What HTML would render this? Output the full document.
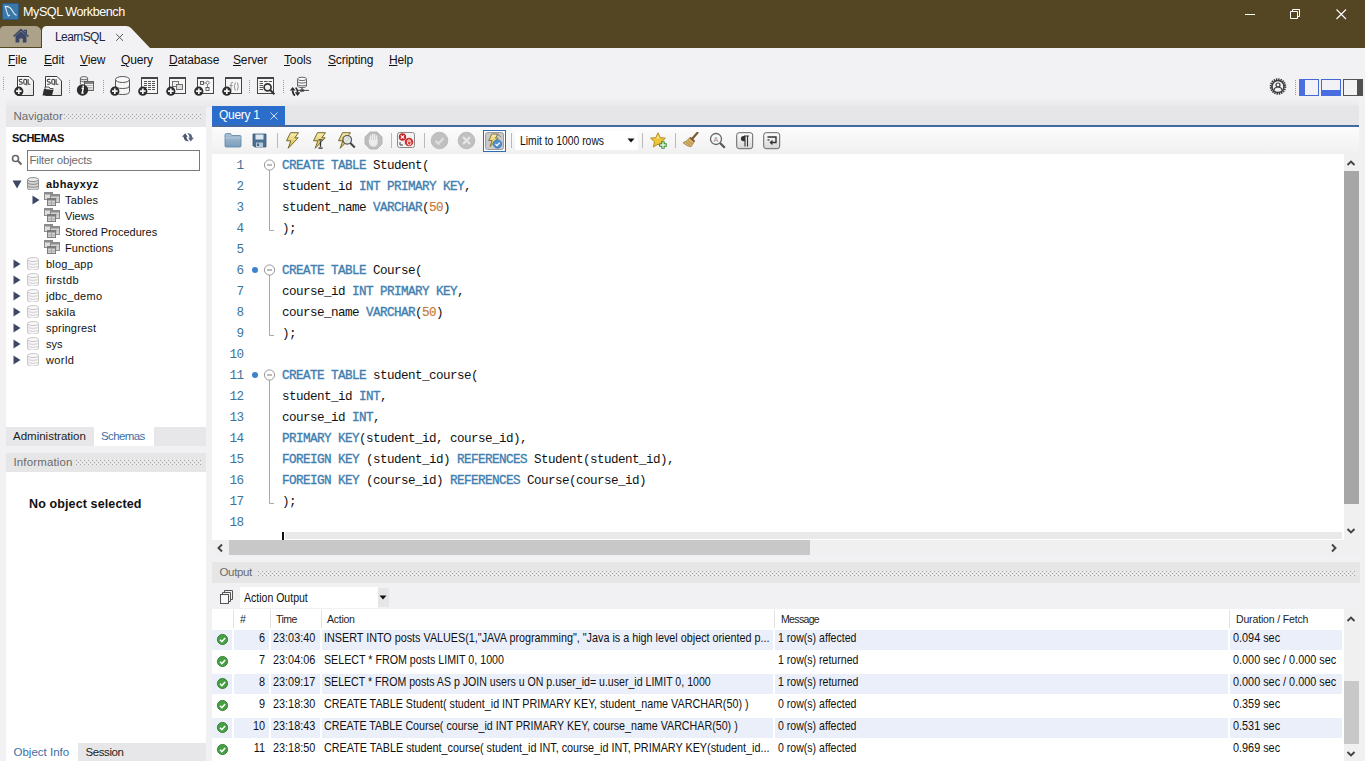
<!DOCTYPE html>
<html><head><meta charset="utf-8">
<style>
*{box-sizing:border-box;margin:0;padding:0}
html,body{width:1365px;height:761px;overflow:hidden;background:#f1f1f4;font-family:"Liberation Sans",sans-serif;}
.abs{position:absolute}
#titlebar{position:absolute;left:0;top:0;width:1365px;height:48px;background:#544623}
#title{position:absolute;left:23px;top:5px;color:#fff;font-size:12.6px;letter-spacing:-0.45px;white-space:nowrap}
#menubar{position:absolute;left:0;top:48px;width:1365px;height:24px;background:#f2f2f5}
.mi{position:absolute;top:53px;font-size:12px;letter-spacing:-0.15px;color:#111;white-space:nowrap}
.mi u{text-decoration:underline;text-underline-offset:1px}
#toolbar{position:absolute;left:0;top:72px;width:1365px;height:28px;background:#f2f2f5}
.t{position:absolute;white-space:nowrap}
.nav{font-size:11px;color:#111}
.code{font-family:"Liberation Mono",monospace;font-size:12.6px;letter-spacing:-0.56px;color:#111;white-space:pre;position:absolute;left:282px}
.kw{color:#3f80b0;-webkit-text-stroke:0.350px #3f80b0}
.num{color:#c67c38;-webkit-text-stroke:0.200px #c67c38}
.ln{position:absolute;font-family:"Liberation Mono",monospace;font-size:12.6px;letter-spacing:-0.56px;color:#3b7499;text-align:right;width:30px;left:213.500px}
.dots{position:absolute;height:7px;background:repeating-conic-gradient(#cbcbcf 0% 25%,transparent 0% 50%) 0 0/2px 2px}
.row{position:absolute;left:212px;width:1129px;height:22px}
.row.alt{background:#ebeffa}
.cell{position:absolute;font-size:13px;color:#111;white-space:nowrap;transform-origin:0 50%;transform:scaleX(0.835)}
</style></head><body>
<svg width="0" height="0" style="position:absolute"><defs><pattern id="dp" width="4" height="4" patternUnits="userSpaceOnUse"><rect x="0" y="0" width="1" height="1" fill="#a4a4a4"/><rect x="2" y="2" width="1" height="1" fill="#a4a4a4"/><rect x="2" y="0" width="1" height="1" fill="#f4f4f4"/><rect x="0" y="2" width="1" height="1" fill="#f4f4f4"/></pattern></defs></svg><div id="titlebar"></div>
<div id="title">MySQL Workbench</div>
<div id="menubar"></div>
<div id="toolbar"></div>

<div class="abs" style="left:6px;top:97px;width:1353px;height:10px;background:linear-gradient(#f2f2f5,#e9e9eb)"></div>
<!-- app icon -->
<svg class="abs" style="left:2px;top:3px" width="17" height="17" viewBox="0 0 17 17"><rect x="0.5" y="0.5" width="16" height="16" rx="1" fill="#3a78aa" stroke="#2a5a85"/><path d="M2.5 3.5 C6 3 9 5 10.5 8 C11.5 10 12.5 11.5 14.5 12.5 M3.5 4 C4 7 5 10 6.5 13.5 M6 13 L8 12" stroke="#dfe9f3" stroke-width="1.1" fill="none"/></svg>
<!-- home tab -->
<svg class="abs" style="left:0;top:26px" width="160" height="22" viewBox="0 0 160 22">
<path d="M0 21 L0 4 Q0 0 5 0 L35 0 Q39 0 41 4 L41 21 Z" fill="#aba289"/>
<path d="M42 22 L42 5 Q42 0 47 0 L126 0 Q129 0 131 2 L150 22 Z" fill="#f2f2f5"/>
<path d="M13.5 10.5 L21 3.6 L28.5 10.5 M23.8 4.5 L26.2 4.5 L26.2 7.5" stroke="#3b4668" stroke-width="1.6" fill="none"/>
<path d="M15.5 10 L21 5.2 L26.5 10 L26.5 16.5 L22.8 16.5 L22.8 12.5 L19.4 12.5 L19.4 16.5 L15.5 16.5 Z" fill="#3b4668"/>
<path d="M116.2 8 L123 14.800 M123 8 L116.2 14.800" stroke="#555" stroke-width="1" fill="none"/>
</svg>
<div class="t" style="left:55px;top:30px;font-size:12px;color:#1d2440;letter-spacing:-0.600px">LearnSQL</div>
<!-- window controls -->
<svg class="abs" style="left:1235px;top:0" width="130" height="28" viewBox="0 0 130 28">
<path d="M10 14.5 L20 14.5" stroke="#fff" stroke-width="1"/>
<path d="M55.5 11.5 h7 v7 h-7 z M57.5 11.5 v-2 h7 v7 h-2" stroke="#fff" stroke-width="1" fill="none"/>
<path d="M101.5 9.5 L111 19 M111 9.5 L101.5 19" stroke="#fff" stroke-width="1.1"/>
</svg>
<div class="mi" style="left:8px"><u>F</u>ile</div>
<div class="mi" style="left:44px"><u>E</u>dit</div>
<div class="mi" style="left:80px"><u>V</u>iew</div>
<div class="mi" style="left:121px"><u>Q</u>uery</div>
<div class="mi" style="left:169px"><u>D</u>atabase</div>
<div class="mi" style="left:233px"><u>S</u>erver</div>
<div class="mi" style="left:284px"><u>T</u>ools</div>
<div class="mi" style="left:328px"><u>S</u>cripting</div>
<div class="mi" style="left:389px"><u>H</u>elp</div>

<svg width="0" height="0" style="position:absolute"><defs>
<linearGradient id="pg" x1="0" y1="0" x2="1" y2="1"><stop offset="0.300" stop-color="#fff"/><stop offset="1" stop-color="#e2e2e2"/></linearGradient>
<g id="plus"><circle cx="4.8" cy="15.2" r="4.6" fill="#2d2d2d"/><path d="M4.8 12.4 v5.6 M2 15.2 h5.6" stroke="#f4f4f4" stroke-width="1.7"/></g>
<g id="sqlpage"><path d="M3.5 0.5 h11.5 l4.5 4.5 v14.5 h-16 z" fill="url(#pg)" stroke="#3a3a3a" stroke-width="1"/><path d="M8.300 3.400 h-2 q-1.100 0 -1.100 1.200 q0 1.200 1.100 1.200 h0.900 q1.100 0 1.100 1.200 q0 1.200 -1.100 1.200 h-2.200 M9.800 4.600 q0 -1.200 1.100 -1.200 h0.600 q1.100 0 1.100 1.200 v2.400 q0 1.200 -1.100 1.200 h-0.600 q-1.100 0 -1.100 -1.200 z M11.600 7.800 l1.200 1.400 M14.100 3 v5.200 h2.300" stroke="#4a4a4a" stroke-width="1.150" fill="none"/></g>
<g id="win"><rect x="3.5" y="1.5" width="16" height="16" fill="#f6f6f6" stroke="#444" stroke-width="1"/><rect x="3" y="1" width="17" height="2" fill="#444"/></g>
</defs></svg>
<div class="abs" style="left:3px;top:77px;width:1px;height:13px;background-image:linear-gradient(#9a9aa0 50%,transparent 50%);background-size:1px 2px"></div><div class="abs" style="left:69px;top:80px;width:1px;height:13px;background-image:linear-gradient(#9a9aa0 50%,transparent 50%);background-size:1px 2px"></div><div class="abs" style="left:103px;top:80px;width:1px;height:13px;background-image:linear-gradient(#9a9aa0 50%,transparent 50%);background-size:1px 2px"></div><div class="abs" style="left:249px;top:80px;width:1px;height:13px;background-image:linear-gradient(#9a9aa0 50%,transparent 50%);background-size:1px 2px"></div><div class="abs" style="left:283px;top:80px;width:1px;height:13px;background-image:linear-gradient(#9a9aa0 50%,transparent 50%);background-size:1px 2px"></div><svg class="abs" style="left:14px;top:76px" width="21" height="21" viewBox="0 0 21 21"><use href="#sqlpage"/><use href="#plus"/></svg><svg class="abs" style="left:42px;top:76px" width="21" height="21" viewBox="0 0 21 21"><use href="#sqlpage"/><path d="M0.5 19.5 L2 13 L3 13 L3 11 L7 11 L8 12.5 L11 12.5 L11 14 L11.5 14 L10 19.5 Z" fill="#2d2d2d"/><path d="M3 13 L3 11 L7 11 L8 12.5 L11 12.5 L11 14" fill="#eee" stroke="#2d2d2d" stroke-width="0.8"/></svg><svg class="abs" style="left:76px;top:76px" width="21" height="21" viewBox="0 0 21 21"><ellipse cx="8" cy="2.2" rx="3.6" ry="1.6" fill="#f4f4f4" stroke="#555" stroke-width="0.9"/><path d="M4.4 2.2 v6 M11.6 2.2 v3" stroke="#555" stroke-width="0.9" fill="none"/><path d="M4.4 5 q3.6 2 7.2 0" stroke="#555" stroke-width="0.8" fill="none"/><rect x="8.5" y="5.5" width="9" height="9" fill="#f2f2f2" stroke="#555" stroke-width="0.9"/><path d="M8.5 7 h9" stroke="#555" stroke-width="1.4"/><path d="M10 9.5 h6.5 M10 11.5 h6.5 M10 13 h6.5" stroke="#999" stroke-width="0.7"/><circle cx="6.5" cy="14" r="5.7" fill="#2d2d2d"/><path d="M7.3 9.6 l-0.3 1.6 M5.6 12.3 h1.6 l-1 4.6 h1.4" stroke="#fff" stroke-width="1.5" fill="none"/></svg><svg class="abs" style="left:110px;top:76px" width="21" height="21" viewBox="0 0 21 21"><path d="M5.5 3.5 v12 q0 3 7 3 q7 0 7-3 v-12" fill="#f5f5f5" stroke="#555" stroke-width="1"/><ellipse cx="12.5" cy="3.5" rx="7" ry="3" fill="#f8f8f8" stroke="#555" stroke-width="1"/><path d="M5.5 9.5 q0 3 7 3 q7 0 7-3" fill="none" stroke="#555" stroke-width="1"/><use href="#plus"/></svg><svg class="abs" style="left:138px;top:76px" width="21" height="21" viewBox="0 0 21 21"><use href="#win"/><path d="M6 5.5 h12 M6 7.5 h12 M6 9.5 h12 M6 11.5 h12 M6 13.5 h12" stroke="#555" stroke-width="1" stroke-dasharray="3 1"/><use href="#plus"/></svg><svg class="abs" style="left:166px;top:76px" width="21" height="21" viewBox="0 0 21 21"><use href="#win"/><rect x="6.5" y="5.500" width="6" height="5" fill="#eee" stroke="#666" stroke-width="0.9"/><rect x="10.500" y="8.500" width="6" height="5" fill="#ddd" stroke="#666" stroke-width="0.9"/><use href="#plus"/></svg><svg class="abs" style="left:194px;top:76px" width="21" height="21" viewBox="0 0 21 21"><use href="#win"/><rect x="6.500" y="5.500" width="3" height="3" fill="#eee" stroke="#555" stroke-width="0.9"/><path d="M13.500 4.800 l2 2 l-2 2 l-2 -2 z" fill="#eee" stroke="#555" stroke-width="0.8"/><rect x="12" y="11.500" width="3" height="3" fill="#eee" stroke="#555" stroke-width="0.9"/><path d="M9.500 7 h2 M13.500 9 v2.500" stroke="#555" stroke-width="0.7"/><use href="#plus"/></svg><svg class="abs" style="left:222px;top:76px" width="21" height="21" viewBox="0 0 21 21"><use href="#win"/><path d="M9 14.500 V8 q0 -2 2 -1.600 M7.600 9.500 h3 M13.300 6.500 q-2 4 0 8 M15.300 6.500 q2 4 0 8" stroke="#8a8a8a" stroke-width="0.900" fill="none"/><use href="#plus"/></svg><svg class="abs" style="left:254px;top:76px" width="21" height="21" viewBox="0 0 21 21"><use href="#win"/><path d="M5.500 5.500 h13 M5.500 7.500 h4 M5.500 9.500 h4 M5.500 11.500 h4 M5.500 13.500 h4" stroke="#555" stroke-width="1" stroke-dasharray="3.500 1"/><circle cx="13.600" cy="11.300" r="3.500" fill="#f2f2f2" stroke="#333" stroke-width="1.700"/><path d="M16.200 14 L20.300 18.300" stroke="#333" stroke-width="2"/></svg><svg class="abs" style="left:289px;top:76px" width="21" height="21" viewBox="0 0 21 21"><path d="M8.500 3 v7 q0 1.600 4.500 1.600 q4.500 0 4.500 -1.600 v-7" fill="#f7f7f7" stroke="#5a5a5a" stroke-width="0.900"/><ellipse cx="13" cy="2.900" rx="4.500" ry="1.700" fill="#f9f9f9" stroke="#5a5a5a" stroke-width="0.900"/><path d="M8.500 5.400 q0 1.700 4.500 1.700 q4.500 0 4.500 -1.700 M8.500 8.200 q0 1.700 4.500 1.700 q4.500 0 4.500 -1.700" fill="none" stroke="#5a5a5a" stroke-width="0.900"/><path d="M13 11.600 v2" stroke="#444" stroke-width="1.200"/><path d="M9 14.400 h11" stroke="#444" stroke-width="1"/><rect x="11" y="13.200" width="4.200" height="2.500" rx="1" fill="#444"/><path d="M0.800 14.600 L3.700 11 L6.600 14.600 Z M5.800 16.200 L11.400 16.200 L8.600 19.900 Z" fill="#2d2d2d"/><path d="M3.700 14.400 Q3.700 18 6 19.600 M8.600 16.400 Q8.600 13 6.600 11.600" stroke="#2d2d2d" stroke-width="1.700" fill="none"/></svg><svg class="abs" style="left:1268px;top:76px" width="20" height="21" viewBox="0 0 20 21"><circle cx="10" cy="10.500" r="7.200" fill="none" stroke="#3b3b3b" stroke-width="2.200" stroke-dasharray="1.400 0.860"/><circle cx="10" cy="10.500" r="6" fill="#f2f2f5" stroke="#3b3b3b" stroke-width="1.500"/><circle cx="10" cy="9" r="2" fill="none" stroke="#3b3b3b" stroke-width="1.200"/><path d="M6 14 q0.500 -3 4 -3 q3.500 0 4 3" fill="none" stroke="#3b3b3b" stroke-width="1.200"/></svg><div class="abs" style="left:1295px;top:80px;width:1px;height:15px;background-image:linear-gradient(#9a9aa0 50%,transparent 50%);background-size:1px 2px"></div><svg class="abs" style="left:1299px;top:79px" width="20" height="17" viewBox="0 0 20 17"><rect x="0.5" y="0.5" width="19" height="16" fill="#f1f1f6" stroke="#4467d4" stroke-width="1"/><rect x="0" y="0" width="6" height="17" fill="#4a6ee0"/></svg><svg class="abs" style="left:1321px;top:79px" width="20" height="17" viewBox="0 0 20 17"><rect x="0.5" y="0.5" width="19" height="16" fill="#f1f1f6" stroke="#4467d4" stroke-width="1"/><rect x="0" y="11" width="20" height="6" fill="#4a6ee0"/></svg><svg class="abs" style="left:1343px;top:79px" width="20" height="17" viewBox="0 0 20 17"><rect x="0.5" y="0.5" width="19" height="16" fill="#f3f3f3" stroke="#555" stroke-width="1"/><rect x="14" y="0" width="6" height="17" fill="#505050"/></svg>

<div class="abs" style="left:6px;top:106px;width:200px;height:21px;background:#e7e7e9"></div>
<div class="t lbl" style="left:13.500px;top:110px;font-size:11.500px;color:#6b6b6b;letter-spacing:0px">Navigator</div>
<svg class="abs" style="left:64px;top:114px" width="138" height="5"><rect width="138" height="5" fill="url(#dp)"/></svg>
<div class="abs" style="left:6px;top:127px;width:200px;height:300px;background:#fff"></div>
<div class="t tb" style="left:12px;top:132px;font-size:11px;font-weight:bold;color:#111;letter-spacing:-0.450px">SCHEMAS</div>
<svg class="abs" style="left:182px;top:132.500px" width="12" height="9" viewBox="0 0 12 9"><path d="M0 3.800 L3.200 0.200 L5.700 3.800 L4.500 3.800 Q4.300 6.500 6.900 8.300 Q2.200 8.700 1.500 3.800 Z" fill="#4b566f"/><path d="M11.900 4.700 L8.700 8.400 L6.200 4.700 L7.400 4.700 Q7.700 2 5.100 0.300 Q9.800 -0.100 10.400 4.700 Z" fill="#5a6782"/></svg>
<svg class="abs" style="left:11px;top:154px" width="12" height="12" viewBox="0 0 12 12"><circle cx="4.500" cy="4.500" r="3" fill="none" stroke="#666" stroke-width="1.600"/><path d="M6.800 6.800 L10.500 10.500" stroke="#666" stroke-width="2"/></svg>
<div class="abs" style="left:27px;top:150px;width:173px;height:21px;background:#fff;border:1px solid #7a7a7a"></div>
<div class="t tb" style="left:29.500px;top:154px;font-size:11.500px;color:#6d6d6d;letter-spacing:-0.200px">Filter objects</div>
<svg class="abs" style="left:12px;top:180px" width="10" height="9" viewBox="0 0 10 9"><path d="M0.500 0.500 h9 l-4.500 8 z" fill="#3d4766"/></svg><svg class="abs" style="left:27px;top:176.5px" width="12.200" height="13.600" viewBox="0 0 13 15" preserveAspectRatio="none"><path d="M0.600 2.800 v9.400 q0 2.300 5.900 2.300 q5.900 0 5.900 -2.300 v-9.400" fill="#d4d4d4" stroke="#858585" stroke-width="1"/><ellipse cx="6.500" cy="2.800" rx="5.900" ry="2.200" fill="#ececec" stroke="#858585" stroke-width="1"/><path d="M0.600 6 q0 2.200 5.900 2.200 q5.900 0 5.900 -2.200 M0.600 9.200 q0 2.200 5.900 2.200 q5.900 0 5.900 -2.200" fill="none" stroke="#858585" stroke-width="1"/></svg><div class="t nav" style="left:46px;top:178px;font-weight:bold;letter-spacing:0.4px;">abhayxyz</div><svg class="abs" style="left:32px;top:195px" width="8" height="10" viewBox="0 0 8 10"><path d="M0.500 0.500 v9 l7 -4.500 z" fill="#3d4766"/></svg><svg class="abs" style="left:44px;top:192px" width="17" height="15" viewBox="0 0 17 15"><rect x="0.500" y="0.500" width="8" height="7" fill="#dedede" stroke="#8c8c8c"/><rect x="0.500" y="0.500" width="8" height="2" fill="#8c8c8c"/><rect x="6.500" y="2.500" width="9" height="8" fill="#d6d6d6" stroke="#8c8c8c"/><rect x="6.500" y="2.500" width="9" height="2" fill="#8c8c8c"/><path d="M12 5 v5 M7 7 h8" stroke="#b5b5b5" stroke-width="0.800"/><rect x="3.500" y="6.500" width="8" height="7" fill="#d2d2d2" stroke="#7c7c7c"/><rect x="3.500" y="6.500" width="8" height="2" fill="#7c7c7c"/><path d="M4 11 h7 M7.500 9 v4" stroke="#9f9f9f" stroke-width="0.800"/></svg><div class="t nav" style="left:65px;top:194px;letter-spacing:0.25px;">Tables</div><svg class="abs" style="left:44px;top:208px" width="17" height="15" viewBox="0 0 17 15"><rect x="0.500" y="0.500" width="8" height="7" fill="#dedede" stroke="#8c8c8c"/><rect x="0.500" y="0.500" width="8" height="2" fill="#8c8c8c"/><rect x="6.500" y="2.500" width="9" height="8" fill="#d6d6d6" stroke="#8c8c8c"/><rect x="6.500" y="2.500" width="9" height="2" fill="#8c8c8c"/><path d="M12 5 v5 M7 7 h8" stroke="#b5b5b5" stroke-width="0.800"/><rect x="3.500" y="6.500" width="8" height="7" fill="#d2d2d2" stroke="#7c7c7c"/><rect x="3.500" y="6.500" width="8" height="2" fill="#7c7c7c"/><path d="M4 11 h7 M7.500 9 v4" stroke="#9f9f9f" stroke-width="0.800"/></svg><div class="t nav" style="left:65px;top:210px;">Views</div><svg class="abs" style="left:44px;top:224px" width="17" height="15" viewBox="0 0 17 15"><rect x="0.500" y="0.500" width="8" height="7" fill="#dedede" stroke="#8c8c8c"/><rect x="0.500" y="0.500" width="8" height="2" fill="#8c8c8c"/><rect x="6.500" y="2.500" width="9" height="8" fill="#d6d6d6" stroke="#8c8c8c"/><rect x="6.500" y="2.500" width="9" height="2" fill="#8c8c8c"/><path d="M12 5 v5 M7 7 h8" stroke="#b5b5b5" stroke-width="0.800"/><rect x="3.500" y="6.500" width="8" height="7" fill="#d2d2d2" stroke="#7c7c7c"/><rect x="3.500" y="6.500" width="8" height="2" fill="#7c7c7c"/><path d="M4 11 h7 M7.500 9 v4" stroke="#9f9f9f" stroke-width="0.800"/></svg><div class="t nav" style="left:65px;top:226px;letter-spacing:0.03px;">Stored Procedures</div><svg class="abs" style="left:44px;top:240px" width="17" height="15" viewBox="0 0 17 15"><rect x="0.500" y="0.500" width="8" height="7" fill="#dedede" stroke="#8c8c8c"/><rect x="0.500" y="0.500" width="8" height="2" fill="#8c8c8c"/><rect x="6.500" y="2.500" width="9" height="8" fill="#d6d6d6" stroke="#8c8c8c"/><rect x="6.500" y="2.500" width="9" height="2" fill="#8c8c8c"/><path d="M12 5 v5 M7 7 h8" stroke="#b5b5b5" stroke-width="0.800"/><rect x="3.500" y="6.500" width="8" height="7" fill="#d2d2d2" stroke="#7c7c7c"/><rect x="3.500" y="6.500" width="8" height="2" fill="#7c7c7c"/><path d="M4 11 h7 M7.500 9 v4" stroke="#9f9f9f" stroke-width="0.800"/></svg><div class="t nav" style="left:65px;top:242px;letter-spacing:0.08px;">Functions</div><svg class="abs" style="left:13px;top:259px" width="8" height="10" viewBox="0 0 8 10"><path d="M0.500 0.500 v9 l7 -4.500 z" fill="#3d4766"/></svg><svg class="abs" style="left:27px;top:256.5px" width="12.200" height="13.600" viewBox="0 0 13 15" preserveAspectRatio="none"><path d="M0.600 2.800 v9.400 q0 2.300 5.900 2.300 q5.900 0 5.900 -2.300 v-9.400" fill="#f6f6f6" stroke="#c2c2c2" stroke-width="1"/><ellipse cx="6.500" cy="2.800" rx="5.900" ry="2.200" fill="#f8f8f8" stroke="#c2c2c2" stroke-width="1"/><path d="M0.600 6 q0 2.200 5.900 2.200 q5.900 0 5.900 -2.200 M0.600 9.200 q0 2.200 5.900 2.200 q5.900 0 5.900 -2.200" fill="none" stroke="#cdcdcd" stroke-width="1"/></svg><div class="t nav" style="left:46px;top:258px;letter-spacing:0.22px;">blog_app</div><svg class="abs" style="left:13px;top:275px" width="8" height="10" viewBox="0 0 8 10"><path d="M0.500 0.500 v9 l7 -4.500 z" fill="#3d4766"/></svg><svg class="abs" style="left:27px;top:272.5px" width="12.200" height="13.600" viewBox="0 0 13 15" preserveAspectRatio="none"><path d="M0.600 2.800 v9.400 q0 2.300 5.900 2.300 q5.900 0 5.900 -2.300 v-9.400" fill="#f6f6f6" stroke="#c2c2c2" stroke-width="1"/><ellipse cx="6.500" cy="2.800" rx="5.900" ry="2.200" fill="#f8f8f8" stroke="#c2c2c2" stroke-width="1"/><path d="M0.600 6 q0 2.200 5.900 2.200 q5.900 0 5.900 -2.200 M0.600 9.200 q0 2.200 5.900 2.200 q5.900 0 5.900 -2.200" fill="none" stroke="#cdcdcd" stroke-width="1"/></svg><div class="t nav" style="left:46px;top:274px;letter-spacing:0.45px;">firstdb</div><svg class="abs" style="left:13px;top:291px" width="8" height="10" viewBox="0 0 8 10"><path d="M0.500 0.500 v9 l7 -4.500 z" fill="#3d4766"/></svg><svg class="abs" style="left:27px;top:288.5px" width="12.200" height="13.600" viewBox="0 0 13 15" preserveAspectRatio="none"><path d="M0.600 2.800 v9.400 q0 2.300 5.900 2.300 q5.900 0 5.900 -2.300 v-9.400" fill="#f6f6f6" stroke="#c2c2c2" stroke-width="1"/><ellipse cx="6.500" cy="2.800" rx="5.900" ry="2.200" fill="#f8f8f8" stroke="#c2c2c2" stroke-width="1"/><path d="M0.600 6 q0 2.200 5.900 2.200 q5.900 0 5.900 -2.200 M0.600 9.200 q0 2.200 5.900 2.200 q5.900 0 5.900 -2.200" fill="none" stroke="#cdcdcd" stroke-width="1"/></svg><div class="t nav" style="left:46px;top:290px;letter-spacing:0.28px;">jdbc_demo</div><svg class="abs" style="left:13px;top:307px" width="8" height="10" viewBox="0 0 8 10"><path d="M0.500 0.500 v9 l7 -4.500 z" fill="#3d4766"/></svg><svg class="abs" style="left:27px;top:304.5px" width="12.200" height="13.600" viewBox="0 0 13 15" preserveAspectRatio="none"><path d="M0.600 2.800 v9.400 q0 2.300 5.900 2.300 q5.900 0 5.900 -2.300 v-9.400" fill="#f6f6f6" stroke="#c2c2c2" stroke-width="1"/><ellipse cx="6.500" cy="2.800" rx="5.900" ry="2.200" fill="#f8f8f8" stroke="#c2c2c2" stroke-width="1"/><path d="M0.600 6 q0 2.200 5.900 2.200 q5.900 0 5.900 -2.200 M0.600 9.200 q0 2.200 5.900 2.200 q5.900 0 5.900 -2.200" fill="none" stroke="#cdcdcd" stroke-width="1"/></svg><div class="t nav" style="left:46px;top:306px;letter-spacing:0.23px;">sakila</div><svg class="abs" style="left:13px;top:323px" width="8" height="10" viewBox="0 0 8 10"><path d="M0.500 0.500 v9 l7 -4.500 z" fill="#3d4766"/></svg><svg class="abs" style="left:27px;top:320.5px" width="12.200" height="13.600" viewBox="0 0 13 15" preserveAspectRatio="none"><path d="M0.600 2.800 v9.400 q0 2.300 5.900 2.300 q5.900 0 5.900 -2.300 v-9.400" fill="#f6f6f6" stroke="#c2c2c2" stroke-width="1"/><ellipse cx="6.500" cy="2.800" rx="5.900" ry="2.200" fill="#f8f8f8" stroke="#c2c2c2" stroke-width="1"/><path d="M0.600 6 q0 2.200 5.900 2.200 q5.900 0 5.900 -2.200 M0.600 9.200 q0 2.200 5.900 2.200 q5.900 0 5.900 -2.200" fill="none" stroke="#cdcdcd" stroke-width="1"/></svg><div class="t nav" style="left:46px;top:322px;letter-spacing:0.2px;">springrest</div><svg class="abs" style="left:13px;top:339px" width="8" height="10" viewBox="0 0 8 10"><path d="M0.500 0.500 v9 l7 -4.500 z" fill="#3d4766"/></svg><svg class="abs" style="left:27px;top:336.5px" width="12.200" height="13.600" viewBox="0 0 13 15" preserveAspectRatio="none"><path d="M0.600 2.800 v9.400 q0 2.300 5.900 2.300 q5.900 0 5.900 -2.300 v-9.400" fill="#f6f6f6" stroke="#c2c2c2" stroke-width="1"/><ellipse cx="6.500" cy="2.800" rx="5.900" ry="2.200" fill="#f8f8f8" stroke="#c2c2c2" stroke-width="1"/><path d="M0.600 6 q0 2.200 5.900 2.200 q5.900 0 5.900 -2.200 M0.600 9.200 q0 2.200 5.900 2.200 q5.900 0 5.900 -2.200" fill="none" stroke="#cdcdcd" stroke-width="1"/></svg><div class="t nav" style="left:46px;top:338px;">sys</div><svg class="abs" style="left:13px;top:355px" width="8" height="10" viewBox="0 0 8 10"><path d="M0.500 0.500 v9 l7 -4.500 z" fill="#3d4766"/></svg><svg class="abs" style="left:27px;top:352.5px" width="12.200" height="13.600" viewBox="0 0 13 15" preserveAspectRatio="none"><path d="M0.600 2.800 v9.400 q0 2.300 5.900 2.300 q5.900 0 5.900 -2.300 v-9.400" fill="#f6f6f6" stroke="#c2c2c2" stroke-width="1"/><ellipse cx="6.500" cy="2.800" rx="5.900" ry="2.200" fill="#f8f8f8" stroke="#c2c2c2" stroke-width="1"/><path d="M0.600 6 q0 2.200 5.900 2.200 q5.900 0 5.900 -2.200 M0.600 9.200 q0 2.200 5.900 2.200 q5.900 0 5.900 -2.200" fill="none" stroke="#cdcdcd" stroke-width="1"/></svg><div class="t nav" style="left:46px;top:354px;letter-spacing:0.4px;">world</div>
<div class="abs" style="left:6px;top:427px;width:200px;height:19px;background:#e7e7e9"></div>
<div class="abs" style="left:94px;top:427px;width:60px;height:19px;background:#fff"></div>
<div class="t tb" style="left:13px;top:430px;font-size:11.5px;color:#222">Administration</div>
<div class="t tb" style="left:101px;top:430px;font-size:11.5px;color:#3d6ea5;letter-spacing:-0.600px">Schemas</div>
<div class="abs" style="left:6px;top:453px;width:200px;height:19.500px;background:#e6e6e7"></div>
<div class="t lbl" style="left:13.500px;top:456px;font-size:11.500px;color:#6b6b6b;letter-spacing:0.140px">Information</div>
<svg class="abs" style="left:76px;top:460px" width="126" height="5"><rect width="126" height="5" fill="url(#dp)"/></svg>
<div class="abs" style="left:6px;top:472px;width:200px;height:289px;background:#fff"></div>
<div class="t tb" style="left:29px;top:497px;font-size:12.5px;font-weight:bold;color:#111;letter-spacing:0.120px">No object selected</div>
<div class="abs" style="left:6px;top:743px;width:200px;height:18px;background:#e7e7e9"></div>
<div class="abs" style="left:6px;top:743px;width:72px;height:18px;background:#fff"></div>
<div class="t tb" style="left:13.500px;top:746px;font-size:11.5px;color:#3d6ea5">Object Info</div>
<div class="t tb" style="left:85.500px;top:746px;font-size:11.5px;color:#222;letter-spacing:-0.400px">Session</div>


<div class="abs" style="left:212px;top:106px;width:1147px;height:19px;background:#e6e6e8"></div>
<div class="abs" style="left:212px;top:106px;width:73px;height:20px;background:#2b6dca"></div>
<div class="t" style="left:219px;top:108px;font-size:12px;color:#fff;letter-spacing:-0.3px">Query 1</div>
<svg class="abs" style="left:269px;top:111px" width="10" height="10" viewBox="0 0 10 10"><path d="M1.500 1.500 L8.500 8.500 M8.500 1.500 L1.500 8.500" stroke="#cfe0f5" stroke-width="1"/></svg>
<div class="abs" style="left:212px;top:125px;width:1147px;height:2px;background:#44689f"></div>
<div class="abs" style="left:212px;top:127px;width:1147px;height:27px;background:linear-gradient(#fcfcfc,#f0f0f0)"></div>
<div class="abs" style="left:212px;top:154px;width:1132px;height:386px;background:#fff"></div>
<div class="abs" style="left:1344px;top:154px;width:15px;height:402px;background:#f0f0f0"></div>
<div class="abs" style="left:1344px;top:171px;width:15px;height:333px;background:#a6a6a6"></div>
<svg class="abs" style="left:1346px;top:159px" width="10" height="8" viewBox="0 0 10 8"><path d="M1.500 6 L5 2.500 L8.500 6" stroke="#444" stroke-width="1.900" fill="none"/></svg>
<svg class="abs" style="left:1346px;top:527px" width="10" height="8" viewBox="0 0 10 8"><path d="M1.500 2 L5 5.500 L8.500 2" stroke="#444" stroke-width="1.900" fill="none"/></svg>
<div class="abs" style="left:285px;top:532px;width:1057px;height:6.500px;background:#e9e9e9"></div>
<div class="abs" style="left:282px;top:532px;width:2px;height:8px;background:#111"></div>
<div class="abs" style="left:212px;top:539.500px;width:1132px;height:16.500px;background:#f0f0f0"></div>
<div class="abs" style="left:229px;top:540px;width:581px;height:15px;background:#c8c8c8"></div>
<svg class="abs" style="left:216px;top:543px" width="8" height="10" viewBox="0 0 8 10"><path d="M6 1.500 L2.500 5 L6 8.500" stroke="#444" stroke-width="1.900" fill="none"/></svg>
<svg class="abs" style="left:1330px;top:543px" width="8" height="10" viewBox="0 0 8 10"><path d="M2 1.500 L5.500 5 L2 8.500" stroke="#444" stroke-width="1.900" fill="none"/></svg>
<div class="ln" style="top:159px">1</div><div class="code" style="top:159px"><span class="kw">CREATE TABLE</span> Student(</div><div class="ln" style="top:180px">2</div><div class="code" style="top:180px">student_id <span class="kw">INT PRIMARY KEY</span>,</div><div class="ln" style="top:201px">3</div><div class="code" style="top:201px">student_name <span class="kw">VARCHAR</span>(<span class="num">50</span>)</div><div class="ln" style="top:222px">4</div><div class="code" style="top:222px">);</div><div class="ln" style="top:243px">5</div><div class="ln" style="top:264px">6</div><div class="code" style="top:264px"><span class="kw">CREATE TABLE</span> Course(</div><div class="ln" style="top:285px">7</div><div class="code" style="top:285px">course_id <span class="kw">INT PRIMARY KEY</span>,</div><div class="ln" style="top:306px">8</div><div class="code" style="top:306px">course_name <span class="kw">VARCHAR</span>(<span class="num">50</span>)</div><div class="ln" style="top:327px">9</div><div class="code" style="top:327px">);</div><div class="ln" style="top:348px">10</div><div class="ln" style="top:369px">11</div><div class="code" style="top:369px"><span class="kw">CREATE TABLE</span> student_course(</div><div class="ln" style="top:390px">12</div><div class="code" style="top:390px">student_id <span class="kw">INT</span>,</div><div class="ln" style="top:411px">13</div><div class="code" style="top:411px">course_id <span class="kw">INT</span>,</div><div class="ln" style="top:432px">14</div><div class="code" style="top:432px"><span class="kw">PRIMARY KEY</span>(student_id, course_id),</div><div class="ln" style="top:453px">15</div><div class="code" style="top:453px"><span class="kw">FOREIGN KEY</span> (student_id) <span class="kw">REFERENCES</span> Student(student_id),</div><div class="ln" style="top:474px">16</div><div class="code" style="top:474px"><span class="kw">FOREIGN KEY</span> (course_id) <span class="kw">REFERENCES</span> Course(course_id)</div><div class="ln" style="top:495px">17</div><div class="code" style="top:495px">);</div><div class="ln" style="top:516px">18</div><svg class="abs" style="left:263px;top:159px" width="14" height="77" viewBox="0 0 14 77"><path d="M6.500 11 V71.5 H11" stroke="#a8a8a8" stroke-width="1" fill="none"/><circle cx="6.500" cy="6" r="5.100" fill="#fff" stroke="#9a9a9a" stroke-width="1"/><path d="M4 6 h5" stroke="#777" stroke-width="1"/></svg><svg class="abs" style="left:263px;top:264px" width="14" height="77" viewBox="0 0 14 77"><path d="M6.500 11 V71.5 H11" stroke="#a8a8a8" stroke-width="1" fill="none"/><circle cx="6.500" cy="6" r="5.100" fill="#fff" stroke="#9a9a9a" stroke-width="1"/><path d="M4 6 h5" stroke="#777" stroke-width="1"/></svg><div class="abs" style="left:252px;top:267px;width:6px;height:6px;border-radius:3px;background:#3c82cc"></div><svg class="abs" style="left:263px;top:369px" width="14" height="140" viewBox="0 0 14 140"><path d="M6.500 11 V134.5 H11" stroke="#a8a8a8" stroke-width="1" fill="none"/><circle cx="6.500" cy="6" r="5.100" fill="#fff" stroke="#9a9a9a" stroke-width="1"/><path d="M4 6 h5" stroke="#777" stroke-width="1"/></svg><div class="abs" style="left:252px;top:372px;width:6px;height:6px;border-radius:3px;background:#3c82cc"></div><svg width="0" height="0" style="position:absolute"><defs>
<linearGradient id="fg" x1="0" y1="0" x2="0" y2="1"><stop offset="0" stop-color="#a9c1d6"/><stop offset="1" stop-color="#7a9dbc"/></linearGradient>
<linearGradient id="yg" x1="0" y1="0" x2="0" y2="1"><stop offset="0" stop-color="#f6ecae"/><stop offset="1" stop-color="#d9bd45"/></linearGradient>
<linearGradient id="bg2" x1="0" y1="0" x2="0" y2="1"><stop offset="0" stop-color="#fdfdfd"/><stop offset="1" stop-color="#d6d6d6"/></linearGradient>
<g id="bolt"><path d="M5.500 0.700 L13.500 0.700 L9.800 5.800 L13.200 5.800 L3.200 16.300 L5.800 8.800 L1.500 8.800 Z" fill="url(#yg)" stroke="#6b5a1e" stroke-width="0.900" stroke-linejoin="round"/></g>
</defs></svg><div class="abs" style="left:277px;top:133px;width:1px;height:15px;background:#b9b9b9"></div><div class="abs" style="left:391px;top:133px;width:1px;height:15px;background:#b9b9b9"></div><div class="abs" style="left:424px;top:133px;width:1px;height:15px;background:#b9b9b9"></div><div class="abs" style="left:511px;top:133px;width:1px;height:15px;background:#b9b9b9"></div><div class="abs" style="left:642px;top:133px;width:1px;height:15px;background:#b9b9b9"></div><div class="abs" style="left:675px;top:133px;width:1px;height:15px;background:#b9b9b9"></div><svg class="abs" style="left:224px;top:132px" width="18" height="16" viewBox="0 0 18 16"><path d="M1 3 q0 -1.500 1.500 -1.500 h4 l1.500 2 h8 q1 0 1 1 v9.500 q0 1 -1 1 h-14 q-1 0 -1 -1 z" fill="url(#fg)" stroke="#5d82a5" stroke-width="0.800"/><path d="M1 6 h16" stroke="#b9cde0" stroke-width="0.800"/></svg><svg class="abs" style="left:252px;top:133px" width="15" height="15" viewBox="0 0 15 15"><path d="M1 1 h13 v13 h-11.500 l-1.500 -1.500 z" fill="#4a6f92" stroke="#3a5a7a" stroke-width="0.800"/><rect x="3.500" y="1.500" width="8" height="5" fill="#dfe8f0"/><rect x="4" y="9.500" width="7" height="4.500" fill="#b9c8d6"/><rect x="5" y="10.500" width="2" height="2.500" fill="#3f6c96"/></svg><svg class="abs" style="left:285px;top:132px" width="16" height="18" viewBox="0 0 16 18"><use href="#bolt"/></svg><svg class="abs" style="left:312px;top:132px" width="16" height="18" viewBox="0 0 16 18"><use href="#bolt"/><path d="M6.500 8 h4 M8.500 8 v8 M6.500 16 h4" stroke="#333" stroke-width="1.300" fill="none"/><path d="M7.200 8.800 h2.600 M7.200 15.200 h2.600" stroke="#fff" stroke-width="0.500"/></svg><svg class="abs" style="left:337px;top:132px" width="20" height="18" viewBox="0 0 20 18"><use href="#bolt"/><circle cx="10.200" cy="7.800" r="4.300" fill="#dfe8ef" fill-opacity="0.850" stroke="#555" stroke-width="1.200"/><path d="M13.300 11 L17.800 15.500" stroke="#444" stroke-width="2"/></svg><svg class="abs" style="left:364px;top:131px" width="19" height="19" viewBox="0 0 19 19"><path d="M6 1 h7 l5 5 v7 l-5 5 h-7 l-5 -5 v-7 z" fill="#bdbdbd" stroke="#adadad" stroke-width="0.800"/><path d="M6.500 10 v-5 M8.500 9 v-5.500 M10.500 9 v-5.500 M12.500 9.500 v-4.500 M5.500 9 q0 6 4 6 q3.500 0 3.500 -5 v-1" stroke="#ececec" stroke-width="1.500" fill="none" stroke-linecap="round"/><path d="M6.500 9 h6 v3 q-1 3 -3 3 q-3 0 -3 -3 z" fill="#ececec"/></svg><svg class="abs" style="left:397px;top:131px" width="19" height="19" viewBox="0 0 19 19"><rect x="0.500" y="1.500" width="17" height="15" rx="2" fill="#f3f3f3" stroke="#8a8a8a"/><circle cx="5.500" cy="6" r="3.700" fill="#c8262b"/><path d="M3.800 4.300 l3.400 3.400 M7.200 4.300 l-3.400 3.400" stroke="#fff" stroke-width="1.200"/><circle cx="12" cy="11" r="4.300" fill="#d2322f"/><path d="M10.800 11.500 v-2.500 M12 11 v-3 M13.200 11.500 v-2.500 M10.300 11 q0 3 2 3 q1.800 0 1.800 -2.500" stroke="#fff" stroke-width="0.900" fill="none"/><path d="M3 11 v3 h3" stroke="#444" stroke-width="1" fill="none"/></svg><svg class="abs" style="left:430px;top:131px" width="19" height="19" viewBox="0 0 19 19"><circle cx="9.500" cy="9.500" r="8.300" fill="#c0c0c0" stroke="#b2b2b2" stroke-width="0.800"/><path d="M5.500 9.800 l3 3 l5 -5.500" stroke="#dedede" stroke-width="2.200" fill="none"/></svg><svg class="abs" style="left:457px;top:131px" width="19" height="19" viewBox="0 0 19 19"><circle cx="9.500" cy="9.500" r="8.300" fill="#c0c0c0" stroke="#b2b2b2" stroke-width="0.800"/><path d="M6 6 l7 7 M13 6 l-7 7" stroke="#e6e6e6" stroke-width="2.300" fill="none"/></svg><svg class="abs" style="left:483px;top:130px" width="23" height="22" viewBox="0 0 23 22"><rect x="0.500" y="0.500" width="22" height="21" fill="#fff" stroke="#2f6cb0"/><rect x="2.500" y="2.500" width="18" height="17" rx="2" fill="#c9c9c9" stroke="#9c9c9c"/><g transform="translate(4.500,3.500) scale(0.800)"><use href="#bolt"/></g><circle cx="14.500" cy="14" r="4.200" fill="#4f8fd0" stroke="#2f6aa8" stroke-width="0.600"/><path d="M12.500 14 l1.500 1.600 l2.700 -3" stroke="#fff" stroke-width="1.300" fill="none"/><path d="M13 5 q3 -1 5 2" stroke="#888" stroke-width="1" fill="none"/></svg><div class="abs" style="left:515px;top:131px;width:123px;height:19px;background:#fff"></div><div class="t sx" id="lim" style="left:520px;top:134px;font-size:12px;color:#111;transform-origin:0 50%;transform:scaleX(0.863)">Limit to 1000 rows</div><svg class="abs" style="left:627px;top:138px" width="8" height="5" viewBox="0 0 8 5"><path d="M0.500 0.500 h7 l-3.500 4 z" fill="#111"/></svg><svg class="abs" style="left:650px;top:132px" width="18" height="18" viewBox="0 0 18 18"><path d="M8 0.800 l2.200 4.800 l5.200 0.600 l-3.900 3.500 l1.100 5.200 l-4.600 -2.700 l-4.600 2.700 l1.100 -5.200 l-3.900 -3.500 l5.200 -0.600 z" fill="#f0c53a" stroke="#a8841c" stroke-width="0.900"/><path d="M8 3 l1.400 3.400 l-3 0 z" fill="#fbe89a"/><path d="M13 9.200 v7.600 M9.200 13 h7.600" stroke="#3a8f30" stroke-width="3.400"/><path d="M13 10.200 v5.600 M10.200 13 h5.600" stroke="#e9f7e2" stroke-width="1.400"/></svg><svg class="abs" style="left:682px;top:132px" width="18" height="17" viewBox="0 0 18 17"><path d="M15.500 0.800 L10 7" stroke="#7a5a30" stroke-width="2.200" stroke-linecap="round"/><path d="M8 5.500 l4.500 3.800 l-3.500 5.500 q-4 -0.500 -8 -4 q4 -1.500 7 -5.300 z" fill="#d7b36a" stroke="#9a7a3a" stroke-width="0.800"/><path d="M4 10 l4 3 M6 8.500 l4 3.500" stroke="#a98748" stroke-width="0.800"/><path d="M8 5.500 l4.500 3.800" stroke="#7b4a2a" stroke-width="1.600"/></svg><svg class="abs" style="left:709px;top:132px" width="18" height="18" viewBox="0 0 18 18"><circle cx="7" cy="7" r="5.500" fill="#f7f7f7" stroke="#666" stroke-width="1.300"/><text x="4.600" y="9.600" font-family="Liberation Sans" font-size="7" fill="#888">A</text><path d="M11 11 L15.800 15.800" stroke="#555" stroke-width="2.200"/></svg><svg class="abs" style="left:736px;top:132px" width="18" height="18" viewBox="0 0 18 18"><rect x="0.700" y="0.700" width="16" height="16" rx="2.500" fill="url(#bg2)" stroke="#666" stroke-width="1"/><path d="M9 4 v10.500 M11.500 4 v10.500 M13 4 h-5" stroke="#333" stroke-width="1.100" fill="none"/><path d="M9 4 h-1.500 a2.600 2.600 0 0 0 0 5.200 h1.500 z" fill="#333"/></svg><svg class="abs" style="left:763px;top:132px" width="18" height="18" viewBox="0 0 18 18"><rect x="0.700" y="0.700" width="16" height="16" rx="2.500" fill="url(#bg2)" stroke="#666" stroke-width="1"/><path d="M4.500 5 h8.500 v5.500 h-5.500" stroke="#333" stroke-width="1.400" fill="none"/><path d="M9.500 7.800 l-3 2.700 l3 2.700 z" fill="#333"/><path d="M4.500 8 h2" stroke="#333" stroke-width="1.200"/></svg>

<div class="abs" style="left:212px;top:562px;width:1147.500px;height:20.500px;background:#e6e6e7"></div>
<div class="t lbl" style="left:219.500px;top:566px;font-size:11.500px;color:#6b6b6b;letter-spacing:-0.350px">Output</div>
<svg class="abs" style="left:258px;top:571px" width="1098" height="5"><rect width="1098" height="5" fill="url(#dp)"/></svg>
<div class="abs" style="left:240px;top:587px;width:138px;height:21px;background:#fff"></div>
<div class="abs" style="left:378px;top:588px;width:11px;height:19px;background:#e6e6e6"></div>
<div class="t sx" id="ao" style="left:244px;top:591px;font-size:12px;color:#111;transform-origin:0 50%;transform:scaleX(0.877)">Action Output</div>
<svg class="abs" style="left:379px;top:595px" width="8" height="5" viewBox="0 0 8 5"><path d="M0.500 0.500 h7 l-3.500 4 z" fill="#111"/></svg><svg class="abs" style="left:219px;top:589px" width="15" height="16" viewBox="0 0 15 16"><rect x="1.500" y="5.500" width="8" height="9" fill="#f8f8f8" stroke="#444" stroke-width="0.900"/><path d="M3.500 5.500 v-2 h8 v9 h-2 M5.500 3.500 v-2 h8 v9 h-2" stroke="#444" stroke-width="0.900" fill="none"/></svg><div class="abs" style="left:212px;top:609px;width:1132px;height:152px;background:#fff"></div><div class="abs" style="left:1344px;top:609px;width:15px;height:152px;background:#f0f0f0"></div><div class="abs" style="left:1344px;top:681px;width:15px;height:63px;background:#c8c8c8"></div><svg class="abs" style="left:1346px;top:615px" width="10" height="8" viewBox="0 0 10 8"><path d="M1.500 6 L5 2.500 L8.500 6" stroke="#444" stroke-width="1.900" fill="none"/></svg><svg class="abs" style="left:1346px;top:750px" width="10" height="8" viewBox="0 0 10 8"><path d="M1.500 2 L5 5.500 L8.500 2" stroke="#444" stroke-width="1.900" fill="none"/></svg><div class="t hd" style="left:240px;top:613px;font-size:10.500px;color:#222;letter-spacing:-0.150px">#</div><div class="t hd" style="left:276px;top:613px;font-size:10.500px;color:#222;letter-spacing:-0.500px">Time</div><div class="t hd" style="left:327px;top:613px;font-size:10.500px;color:#222;letter-spacing:-0.250px">Action</div><div class="t hd" style="left:781px;top:613px;font-size:10.500px;color:#222;letter-spacing:-0.650px">Message</div><div class="t hd" style="left:1236px;top:613px;font-size:10.500px;color:#222;letter-spacing:-0.150px">Duration / Fetch</div><div class="abs" style="left:212px;top:629.5px;width:1130px;height:20px;background:#ebeffa"></div><svg class="abs" style="left:216px;top:633px" width="13" height="13" viewBox="0 0 13 13"><circle cx="6.500" cy="6.500" r="5.100" fill="#46a042" stroke="#2f7a2c" stroke-width="0.900"/><path d="M4 6.800 l1.900 1.900 l3.200 -3.700" stroke="#fff" stroke-width="1.600" fill="none"/></svg><div class="cell" style="left:235px;width:30px;text-align:right;transform-origin:100% 50%;top:630px">6</div><div class="cell c1" style="left:273px;top:630px">23:03:40</div><div class="cell c2" id="a0" style="left:324px;transform:scaleX(0.8296);top:630px">INSERT INTO posts VALUES(1,"JAVA programming", "Java is a high level object oriented p...</div><div class="cell c3" id="m0" style="left:778px;transform:scaleX(0.812);top:630px">1 row(s) affected</div><div class="cell c4" id="d0" style="left:1233px;top:630px">0.094 sec</div><svg class="abs" style="left:216px;top:655px" width="13" height="13" viewBox="0 0 13 13"><circle cx="6.500" cy="6.500" r="5.100" fill="#46a042" stroke="#2f7a2c" stroke-width="0.900"/><path d="M4 6.800 l1.900 1.900 l3.200 -3.700" stroke="#fff" stroke-width="1.600" fill="none"/></svg><div class="cell" style="left:235px;width:30px;text-align:right;transform-origin:100% 50%;top:652px">7</div><div class="cell c1" style="left:273px;top:652px">23:04:06</div><div class="cell c2" id="a1" style="left:324px;transform:scaleX(0.8213);top:652px">SELECT * FROM posts LIMIT 0, 1000</div><div class="cell c3" id="m1" style="left:778px;transform:scaleX(0.812);top:652px">1 row(s) returned</div><div class="cell c4" id="d1" style="left:1233px;top:652px">0.000 sec / 0.000 sec</div><div class="abs" style="left:212px;top:673.5px;width:1130px;height:20px;background:#ebeffa"></div><svg class="abs" style="left:216px;top:677px" width="13" height="13" viewBox="0 0 13 13"><circle cx="6.500" cy="6.500" r="5.100" fill="#46a042" stroke="#2f7a2c" stroke-width="0.900"/><path d="M4 6.800 l1.900 1.900 l3.200 -3.700" stroke="#fff" stroke-width="1.600" fill="none"/></svg><div class="cell" style="left:235px;width:30px;text-align:right;transform-origin:100% 50%;top:674px">8</div><div class="cell c1" style="left:273px;top:674px">23:09:17</div><div class="cell c2" id="a2" style="left:324px;transform:scaleX(0.8148);top:674px">SELECT * FROM posts AS p JOIN users u ON p.user_id= u.user_id LIMIT 0, 1000</div><div class="cell c3" id="m2" style="left:778px;transform:scaleX(0.812);top:674px">1 row(s) returned</div><div class="cell c4" id="d2" style="left:1233px;top:674px">0.000 sec / 0.000 sec</div><svg class="abs" style="left:216px;top:699px" width="13" height="13" viewBox="0 0 13 13"><circle cx="6.500" cy="6.500" r="5.100" fill="#46a042" stroke="#2f7a2c" stroke-width="0.900"/><path d="M4 6.800 l1.900 1.900 l3.200 -3.700" stroke="#fff" stroke-width="1.600" fill="none"/></svg><div class="cell" style="left:235px;width:30px;text-align:right;transform-origin:100% 50%;top:696px">9</div><div class="cell c1" style="left:273px;top:696px">23:18:30</div><div class="cell c2" id="a3" style="left:324px;transform:scaleX(0.8272);top:696px">CREATE TABLE Student( student_id INT PRIMARY KEY, student_name VARCHAR(50) )</div><div class="cell c3" id="m3" style="left:778px;transform:scaleX(0.812);top:696px">0 row(s) affected</div><div class="cell c4" id="d3" style="left:1233px;top:696px">0.359 sec</div><div class="abs" style="left:212px;top:717.5px;width:1130px;height:20px;background:#ebeffa"></div><svg class="abs" style="left:216px;top:721px" width="13" height="13" viewBox="0 0 13 13"><circle cx="6.500" cy="6.500" r="5.100" fill="#46a042" stroke="#2f7a2c" stroke-width="0.900"/><path d="M4 6.800 l1.900 1.900 l3.200 -3.700" stroke="#fff" stroke-width="1.600" fill="none"/></svg><div class="cell" style="left:235px;width:30px;text-align:right;transform-origin:100% 50%;top:718px">10</div><div class="cell c1" style="left:273px;top:718px">23:18:43</div><div class="cell c2" id="a4" style="left:324px;transform:scaleX(0.8223);top:718px">CREATE TABLE Course( course_id INT PRIMARY KEY, course_name VARCHAR(50) )</div><div class="cell c3" id="m4" style="left:778px;transform:scaleX(0.812);top:718px">0 row(s) affected</div><div class="cell c4" id="d4" style="left:1233px;top:718px">0.531 sec</div><svg class="abs" style="left:216px;top:743px" width="13" height="13" viewBox="0 0 13 13"><circle cx="6.500" cy="6.500" r="5.100" fill="#46a042" stroke="#2f7a2c" stroke-width="0.900"/><path d="M4 6.800 l1.900 1.900 l3.200 -3.700" stroke="#fff" stroke-width="1.600" fill="none"/></svg><div class="cell" style="left:235px;width:30px;text-align:right;transform-origin:100% 50%;top:740px">11</div><div class="cell c1" style="left:273px;top:740px">23:18:50</div><div class="cell c2" id="a5" style="left:324px;transform:scaleX(0.8305);top:740px">CREATE TABLE student_course( student_id INT, course_id INT, PRIMARY KEY(student_id...</div><div class="cell c3" id="m5" style="left:778px;transform:scaleX(0.812);top:740px">0 row(s) affected</div><div class="cell c4" id="d5" style="left:1233px;top:740px">0.969 sec</div>
<div class="abs" style="left:233px;top:610px;width:1px;height:18px;background:#e2e2e2"></div><div class="abs" style="left:232px;top:628px;width:2px;height:133px;background:#fff"></div><div class="abs" style="left:270px;top:610px;width:1px;height:18px;background:#e2e2e2"></div><div class="abs" style="left:269px;top:628px;width:2px;height:133px;background:#fff"></div><div class="abs" style="left:321px;top:610px;width:1px;height:18px;background:#e2e2e2"></div><div class="abs" style="left:320px;top:628px;width:2px;height:133px;background:#fff"></div><div class="abs" style="left:774px;top:610px;width:1px;height:18px;background:#e2e2e2"></div><div class="abs" style="left:773px;top:628px;width:2px;height:133px;background:#fff"></div><div class="abs" style="left:1229px;top:610px;width:1px;height:18px;background:#e2e2e2"></div><div class="abs" style="left:1228px;top:628px;width:2px;height:133px;background:#fff"></div></body></html>
